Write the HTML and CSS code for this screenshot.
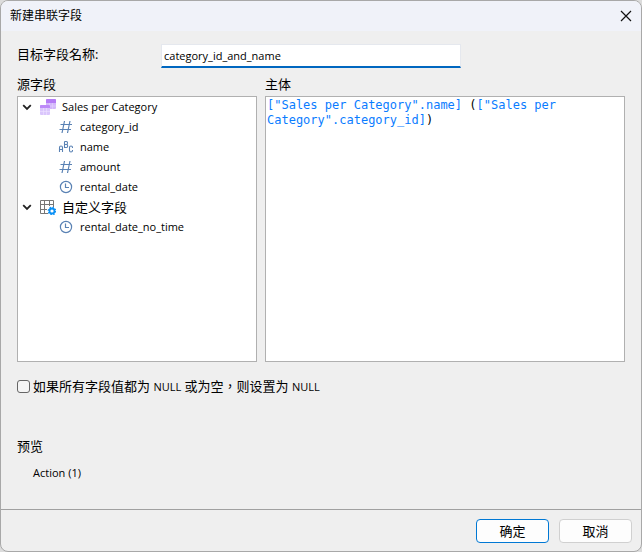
FILE: index.html
```
<!DOCTYPE html>
<html lang="zh-Hant">
<head>
    <meta charset="UTF-8">
    <meta name="viewport" content="width=device-width, initial-scale=1.0">
    <title>新建串联字段</title>
    <link rel="stylesheet" href="styles.css">
</head>
<body>
    <svg class="symbols" aria-hidden="true">
        <symbol id="chevron" viewBox="0 0 10 10">
            <path d="M1.2 3.2 L5 7 L8.8 3.2" fill="none" stroke="#222" stroke-width="1.8"/>
        </symbol>
        <symbol id="number" viewBox="0 0 16 16">
            <path d="M6.5 2 L4 14 M12 2 L9.5 14 M2.5 5.5 H14 M1.5 10.5 H13" fill="none" stroke="#5a82b4" stroke-width="1.2"/>
        </symbol>
        <symbol id="clock" viewBox="0 0 16 16">
            <circle cx="8" cy="8" r="5.6" fill="none" stroke="#5a82b4" stroke-width="1.2"/>
            <path d="M7.5 4.5 V8.5 H11" fill="none" stroke="#5a82b4" stroke-width="1.2"/>
        </symbol>
    </svg>

    <form class="dialog">
        <header class="titlebar">
            <h1>新建串联字段</h1>
            <button type="button" class="close" aria-label="关闭">
                <svg width="12" height="12" viewBox="0 0 12 12"><path d="M1 1 L11 11 M11 1 L1 11" stroke="#111" stroke-width="1.2"/></svg>
            </button>
        </header>

        <main class="content">
            <div class="name-row">
                <label for="fieldName">目标字段名称:</label>
                <input type="text" id="fieldName" value="category_id_and_name">
            </div>

            <div class="panes">
                <section class="pane">
                    <h2>源字段</h2>
                    <ul class="tree box">
                        <li>
                            <div class="group">
                                <svg class="arrow"><use href="#chevron"/></svg>
                                <svg class="group-icon" viewBox="0 0 16 16">
                                    <rect x="6" y="0" width="10" height="10" rx="1" fill="#d3b8fb"/>
                                    <path d="M6 4 V1 Q6 0 7 0 H15 Q16 0 16 1 V4 Z" fill="#b57cf6"/>
                                    <path d="M9.5 4 V10 M12.5 4 V10 M6 7 H16" stroke="#e6d4ff" stroke-width="0.6"/>
                                    <rect x="0" y="6" width="10" height="10" rx="1" fill="#dac6fc"/>
                                    <path d="M0 9 V7 Q0 6 1 6 H9 Q10 6 10 7 V9 Z" fill="#bd8af8"/>
                                    <path d="M3.5 9 V16 M6.5 9 V16 M0 12.5 H10" stroke="#eee2ff" stroke-width="0.6"/>
                                </svg>
                                <span>Sales per Category</span>
                            </div>
                            <ul class="fields">
                                <li><svg class="icon"><use href="#number"/></svg>category_id</li>
                                <li>
                                    <svg class="icon" viewBox="0 0 16 16">
                                        <g fill="none" stroke="#5a82b4" stroke-width="1.1">
                                            <path d="M1.5 13 V8.5 Q1.5 7 3 7 Q4.5 7 4.5 8.5 V13 M1.5 10.5 H4.5"/>
                                            <path d="M6.5 2.5 H8.5 Q9.5 2.5 9.5 3.7 Q9.5 5.5 8.5 5.5 H6.5 M8.5 5.5 Q9.7 5.5 9.7 7 Q9.7 8.5 8.5 8.5 H6.5 V2.5"/>
                                            <path d="M14.5 9 V8.5 Q14.5 7 13 7 Q11.5 7 11.5 8.5 V11.5 Q11.5 13 13 13 Q14.5 13 14.5 11.5 V11"/>
                                        </g>
                                    </svg>name
                                </li>
                                <li><svg class="icon"><use href="#number"/></svg>amount</li>
                                <li><svg class="icon"><use href="#clock"/></svg>rental_date</li>
                            </ul>
                        </li>
                        <li>
                            <div class="group">
                                <svg class="arrow"><use href="#chevron"/></svg>
                                <svg class="group-icon" viewBox="0 0 16 16">
                                    <path d="M8 14.5 H0.5 V1.5 H13.5 V8 M4.5 1.5 V14.5 M9.5 1.5 V7 M0.5 5.5 H13.5 M0.5 10.5 H7" fill="none" stroke="#777" stroke-width="1"/>
                                    <circle cx="12" cy="12" r="2.5" fill="#fff" stroke="#0b90f5" stroke-width="1.8"/>
                                    <circle cx="12" cy="12" r="3.7" fill="none" stroke="#0b90f5" stroke-width="1.3" stroke-dasharray="1.5 1.4"/>
                                </svg>
                                <span class="cjk">自定义字段</span>
                            </div>
                            <ul class="fields">
                                <li><svg class="icon"><use href="#clock"/></svg>rental_date_no_time</li>
                            </ul>
                        </li>
                    </ul>
                </section>

                <section class="pane">
                    <h2 id="bodyLabel">主体</h2>
                    <div class="editor box" role="textbox" aria-multiline="true" aria-labelledby="bodyLabel" contenteditable="true" spellcheck="false"><span class="ref">["Sales per Category".name]</span> (<span class="ref">["Sales per Category".category_id]</span>)</div>
                </section>
            </div>

            <div class="option">
                <input type="checkbox" id="nullIfEmpty">
                <label for="nullIfEmpty">如果所有字段值都为 <span class="latin">NULL</span> 或为空，则设置为 <span class="latin">NULL</span></label>
            </div>

            <h2>预览</h2>
            <p class="preview">Action (1)</p>
        </main>

        <footer class="actions">
            <button type="submit" class="btn primary">确定</button>
            <button type="button" class="btn">取消</button>
        </footer>
    </form>
</body>
</html>
```
FILE: styles.css
```
* {
    box-sizing: border-box;
}
body {
    margin: 0;
    background-color: #dcdcdc;
    color: #000;
    font-family: "Open Sans", "Noto Sans CJK TC", sans-serif;
    font-size: 11px;
    line-height: 20px;
}
h1, h2, p, ul {
    margin: 0;
    padding: 0;
    font-size: 11px;
    font-weight: normal;
}
ul {
    list-style: none;
}
h1 {
    font-size: 12px;
}
h2, label, .cjk, .btn {
    font-size: 13px;
}
input, button {
    font-family: inherit;
    font-size: 11px;
    color: #000;
}
svg {
    flex: none;
}
.symbols {
    position: absolute;
    width: 0;
    height: 0;
}
.dialog {
    display: flex;
    flex-direction: column;
    min-height: 100vh;
    border: 1px solid #a8a8a8;
    border-radius: 8px;
    background-color: #efefef;
    overflow: hidden;
}
.titlebar {
    display: flex;
    align-items: center;
    justify-content: space-between;
    height: 30px;
    padding: 0 9px;
    background-color: #f0f2f9;
}
.close {
    display: flex;
    padding: 0;
    border: none;
    background: none;
}
.content {
    flex: 1;
    padding: 13px 16px;
}
.name-row {
    display: grid;
    grid-template-columns: 144px 300px;
    align-items: start;
}
.name-row input {
    height: 24px;
    padding: 0 2px;
    border: 1px solid #e5e8ee;
    border-bottom: 2px solid #0067c0;
    background-color: #fff;
    outline: none;
}
.panes {
    display: grid;
    grid-template-columns: 2fr 3fr;
    gap: 8px;
    margin: 6px 0 14px;
}
.box {
    height: 266px;
    margin-top: 2px;
    border: 1px solid #b0b0b0;
    background-color: #fff;
}
.group, .fields li {
    display: flex;
    align-items: center;
    height: 20px;
}
.group {
    padding-left: 4px;
}
.arrow {
    width: 10px;
    height: 10px;
    margin-right: 8px;
}
.group-icon {
    width: 16px;
    height: 16px;
    margin-right: 6px;
}
.fields li {
    gap: 6px;
    padding-left: 40px;
}
.icon {
    width: 16px;
    height: 16px;
}
.editor {
    padding: 1px;
    font-family: "DejaVu Sans Mono", monospace;
    font-size: 12px;
    line-height: 15px;
    outline: none;
}
.ref {
    color: #0a7cff;
}
.option {
    display: flex;
    align-items: center;
    gap: 3px;
    margin-bottom: 39px;
}
.option input {
    appearance: none;
    width: 13px;
    height: 13px;
    margin: 0;
    border: 1px solid #666;
    border-radius: 3px;
    background-color: #f5f5f5;
}
.option input:checked {
    background-color: #0067c0;
}
.latin {
    font-size: 11px;
}
.preview {
    margin-top: 7px;
    padding-left: 16px;
}
.actions {
    display: flex;
    justify-content: flex-end;
    gap: 10px;
    padding: 9px 9px 8px;
    border-top: 1px solid #a0a0a0;
}
.btn {
    width: 73px;
    height: 24px;
    padding: 0 0 2px;
    border: 1px solid #d0d0d0;
    border-radius: 4px;
    background-color: #fdfdfd;
}
.btn.primary {
    border-color: #0078d4;
}
```
